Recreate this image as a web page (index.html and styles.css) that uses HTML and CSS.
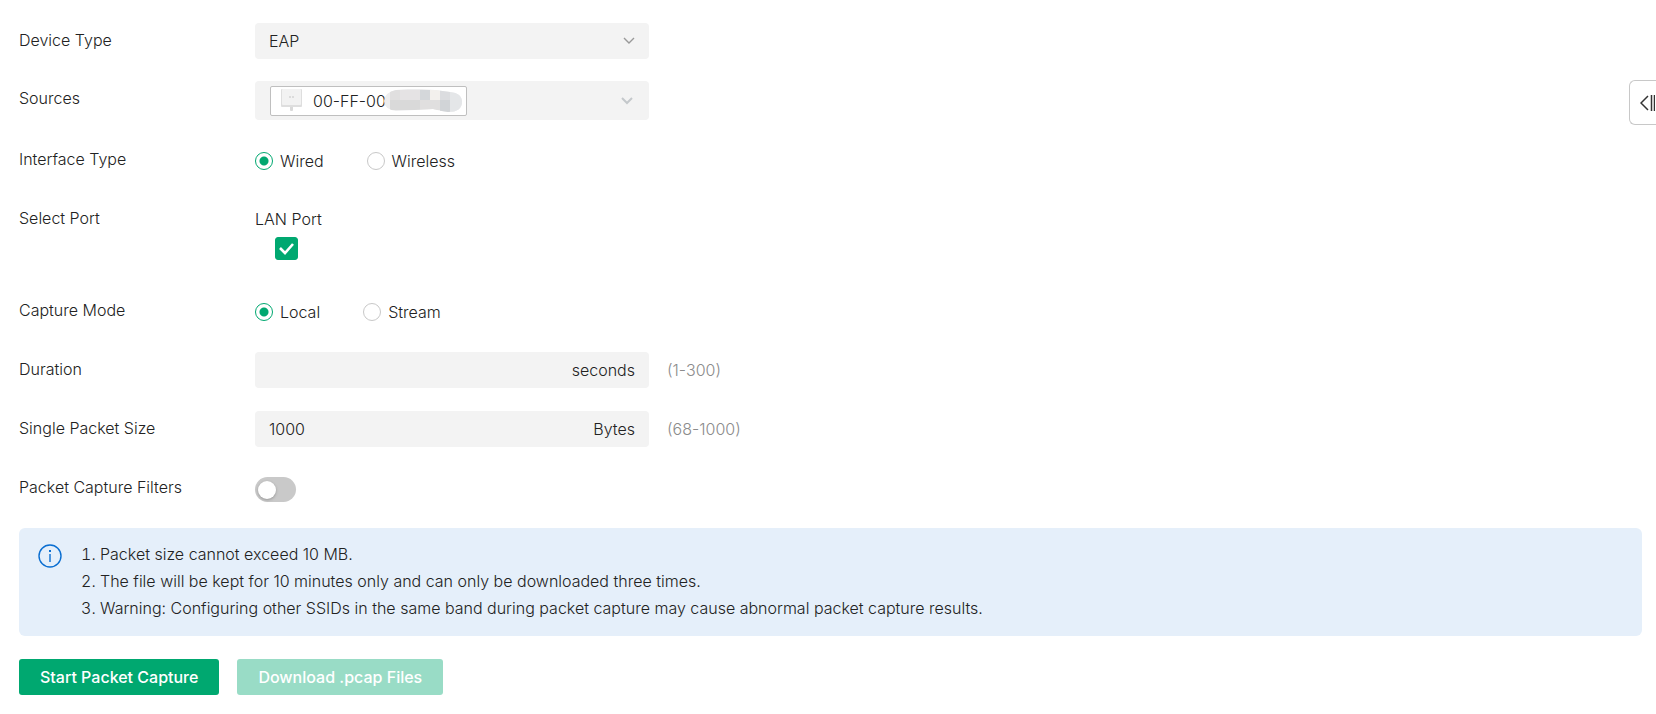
FILE: index.html
```html
<!DOCTYPE html>
<html lang="en">
<head>
<meta charset="utf-8">
<meta name="viewport" content="width=device-width, initial-scale=1">
<title>Packet Capture</title>
<link rel="stylesheet" href="styles.css">
</head>
<body>
<main class="page">
  <form class="form">
    <div class="row row-tight">
      <label class="label" for="device-type">Device Type</label>
      <div class="field">
        <select class="control select" id="device-type"><option>EAP</option></select>
        <svg class="chevron" viewBox="0 0 12 8" aria-hidden="true"><path d="M1 1l5 5 5-5"/></svg>
      </div>
    </div>
    <div class="row">
      <label class="label" for="sources">Sources</label>
      <div class="field">
        <button class="control sources" id="sources" type="button">
          <span class="tag">
            <svg class="device" viewBox="0 0 21 23" aria-hidden="true">
              <rect x="9" y="17" width="3" height="5" rx="1" fill="#d9d9d9"/>
              <rect x="0" y="0" width="21" height="18" rx="1" fill="#dedede"/>
              <rect x="1" y="0" width="19" height="16" rx="1" fill="#f2f2f2"/>
              <path d="M8 8h2M11 8h2" stroke="#c4c4c4"/>
            </svg>
            <span>00-FF-00-</span>
            <svg class="mask" viewBox="0 0 79 24" aria-hidden="true">
              <clipPath id="mask-shape"><path d="M12 1Q35-2 66 3Q78 4 78 13Q78 23 64 23Q56 22 49 20L12 22Q0 20 0 12Q1 3 12 1Z"/></clipPath>
              <g clip-path="url(#mask-shape)">
                <path fill="#ededee" d="M0 0h79v24H0z"/>
                <path fill="#e0dfdf" d="M6 1h10v10H6z"/>
                <path fill="#e5e3e4" d="M16 1h20v10H16z"/>
                <path fill="#d4d7da" d="M36 1h10v10H36z"/>
                <path fill="#f3f0ed" d="M46 1h10v10H46z"/>
                <path fill="#dbdcdf" d="M56 1h10v10H56z"/>
                <path fill="#d9d9d9" d="M6 11h30v10H6z"/>
                <path fill="#e0dfdf" d="M36 11h20v10H36z"/>
                <path fill="#d1d4d7" d="M56 11h10v13H56z"/>
                <path fill="#e4e6e8" d="M66 1h13v23H66z"/>
              </g>
            </svg>
          </span>
        </button>
        <svg class="chevron chevron-muted" viewBox="0 0 12 8" aria-hidden="true"><path d="M1 1l5 5 5-5"/></svg>
      </div>
    </div>
    <div class="row" role="radiogroup" aria-labelledby="interface-label">
      <span class="label" id="interface-label">Interface Type</span>
      <div class="options">
        <label class="option"><input class="radio" type="radio" name="interface" checked>Wired</label>
        <label class="option"><input class="radio" type="radio" name="interface">Wireless</label>
      </div>
    </div>
    <div class="row">
      <span class="label">Select Port</span>
      <label class="port">LAN Port
        <span class="check">
          <input class="checkbox" type="checkbox" checked>
          <svg class="tick" viewBox="0 0 23 23" aria-hidden="true"><path d="M5 11l5 5 8-9"/></svg>
        </span>
      </label>
    </div>
    <div class="row" role="radiogroup" aria-labelledby="mode-label">
      <span class="label" id="mode-label">Capture Mode</span>
      <div class="options">
        <label class="option"><input class="radio" type="radio" name="mode" checked>Local</label>
        <label class="option"><input class="radio" type="radio" name="mode">Stream</label>
      </div>
    </div>
    <div class="row">
      <label class="label" for="duration">Duration</label>
      <div class="field control unit-field"><input class="input" id="duration" type="text"><span>seconds</span></div>
      <span class="hint">(1-300)</span>
    </div>
    <div class="row">
      <label class="label" for="packet-size">Single Packet Size</label>
      <div class="field control unit-field"><input class="input" id="packet-size" type="text" value="1000"><span>Bytes</span></div>
      <span class="hint">(68-1000)</span>
    </div>
    <div class="row row-tight">
      <label class="label" for="filters">Packet Capture Filters</label>
      <input class="toggle" id="filters" type="checkbox" role="switch">
    </div>
    <section class="notice">
      <svg class="info" viewBox="0 0 24 24" aria-hidden="true"><circle cx="12" cy="12" r="11"/><path d="M12 10v8"/><path class="dot" d="M11 6h2v2h-2z"/></svg>
      <ol class="notes">
        <li>Packet size cannot exceed 10 MB.</li>
        <li>The file will be kept for 10 minutes only and can only be downloaded three times.</li>
        <li>Warning: Configuring other SSIDs in the same band during packet capture may cause abnormal packet capture results.</li>
      </ol>
    </section>
    <div class="actions">
      <button class="button" type="button">Start Packet Capture</button>
      <button class="button" type="button" disabled>Download .pcap Files</button>
    </div>
  </form>
  <button class="drawer" type="button" aria-label="Open side panel">
    <svg class="drawer-icon" viewBox="0 0 15 16" aria-hidden="true"><path d="M8 1L1 8l7 7"/><path d="M11.5 0v16M14.5 0v16"/></svg>
  </button>
</main>
</body>
</html>
```
FILE: styles.css
```css
* { box-sizing: border-box; }

body {
  margin: 0;
  background: #fff;
  color: #222;
  font: 300 16px/24px Inter, "Liberation Sans", sans-serif;
}

button, input, select { font: inherit; color: inherit; }

.page { padding: 23px 14px 18px 19px; }

.form { display: flex; flex-direction: column; gap: 22px; }

.row { display: flex; align-items: flex-start; min-height: 37px; }

.row-tight { min-height: 36px; }

.label { flex: 0 0 236px; line-height: 35px; }

.field { position: relative; flex: 0 1 394px; min-width: 0; }

.control {
  width: 100%;
  min-height: 36px;
  padding: 0 14px;
  border: 0;
  border-radius: 4px;
  background: #f3f3f3;
}

.select { display: block; appearance: none; }

.sources { display: flex; align-items: center; min-height: 39px; padding: 0 15px; }

.chevron {
  position: absolute;
  right: 14px;
  top: 50%;
  width: 12px;
  height: 8px;
  margin-top: -4px;
  fill: none;
  stroke: #999;
  stroke-width: 1.4;
  pointer-events: none;
}

.chevron-muted { right: 16px; stroke: #c4c8cb; stroke-width: 2; }

.tag {
  display: flex;
  align-items: center;
  height: 30px;
  padding: 0 3px 0 10px;
  border: 1px solid #bfbfbf;
  border-radius: 2px;
  background: #fff;
}

.device { width: 21px; height: 23px; margin-right: 11px; }

.mask { width: 79px; height: 24px; margin-left: -9px; }

.options { display: flex; gap: 43px; height: 37px; align-items: center; }

.option { display: flex; align-items: center; gap: 7px; }

.radio {
  appearance: none;
  width: 18px;
  height: 18px;
  margin: 0;
  border: 1px solid #c8c8c8;
  border-radius: 50%;
}

.radio:checked { border-color: #00a870; background: radial-gradient(circle, #00a870 4px, #fff 5px); }

.port { display: flex; flex-direction: column; height: 70px; line-height: 36px; }

.check { position: relative; width: 23px; height: 23px; margin-left: 20px; }

.checkbox {
  appearance: none;
  display: block;
  width: 23px;
  height: 23px;
  margin: 0;
  border: 1px solid #c8c8c8;
  border-radius: 3px;
}

.checkbox:checked { border-color: #00a870; background: #00a870; }

.tick { position: absolute; inset: 0; fill: none; stroke: #fff; stroke-width: 2.6; pointer-events: none; }

.unit-field { display: flex; align-items: center; }

.input { flex: 1; min-width: 0; padding: 0; border: 0; background: none; }

.hint { margin-left: 18px; color: #8c8c8c; line-height: 36px; }

.toggle {
  appearance: none;
  width: 41px;
  height: 25px;
  margin: 7px 0 0;
  padding: 4px 3px;
  border-radius: 13px;
  background: #c9c9c9;
}

.toggle::before {
  content: "";
  display: block;
  width: 18px;
  height: 18px;
  border-radius: 50%;
  background: #fff;
  box-shadow: 0 1px 3px rgba(0, 0, 0, .25);
}

.toggle:checked { background: #00a870; }

.notice { display: flex; gap: 38px; padding: 13px 19px 14px; border-radius: 6px; background: #e5effa; }

.info { flex: none; width: 24px; height: 24px; margin-top: 3px; fill: none; stroke: #0a6ed1; stroke-width: 1.4; }

.info .dot { fill: #0a6ed1; stroke: none; }

.notes { margin: 0; padding: 0; line-height: 27px; }

.actions { display: flex; gap: 18px; padding-top: 1px; }

.button {
  height: 36px;
  padding: 0 21px;
  border: 0;
  border-radius: 3px;
  background: #00a870;
  color: #fff;
  font-weight: 500;
}

.button:disabled { background: #99dcc6; }

.drawer {
  position: absolute;
  top: 80px;
  right: 0;
  width: 27px;
  height: 45px;
  padding: 0 0 0 10px;
  border: 1px solid #c8c8c8;
  border-right: 0;
  border-radius: 6px 0 0 6px;
  background: #fff;
}

.drawer-icon { display: block; width: 15px; height: 16px; fill: none; stroke: #333; stroke-width: 1.5; }
```
